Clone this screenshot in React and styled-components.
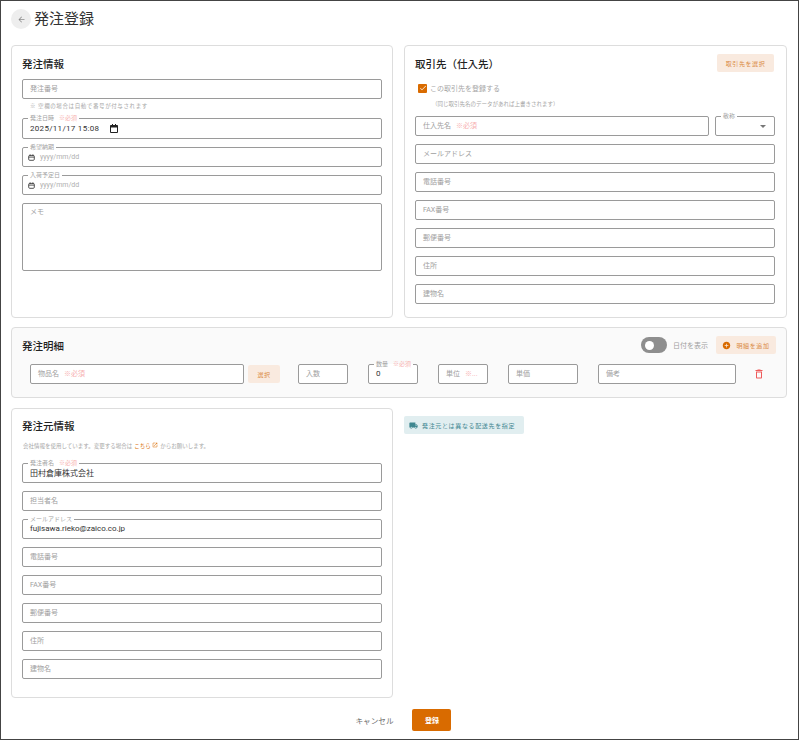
import React from "react";
import styled, { createGlobalStyle } from "styled-components";
import {
  MdAddCircle,
  MdArrowBack,
  MdCheck,
  MdDeleteOutline,
  MdLocalShipping,
  MdOpenInNew,
} from "react-icons/md";

const GlobalStyle = createGlobalStyle`
  html, body {
    margin: 0;
    padding: 0;
    background: #ffffff;
  }
  body {
    font-family: Roboto, "Noto Sans CJK JP", sans-serif;
    color: #333333;
  }
  * {
    box-sizing: border-box;
  }
`;

const ORANGE = "#d96b00";

const Frame = styled.div`
  width: 799px;
  height: 740px;
  border: 1px solid #444444;
  padding: 8px 11px 0 10px;
  overflow: hidden;
`;

const Header = styled.header`
  display: flex;
  align-items: center;
  gap: 3px;
  height: 20px;
  margin-bottom: 16px;
`;

const BackButton = styled.div`
  width: 20px;
  height: 20px;
  border-radius: 50%;
  background: #eeeeee;
  color: #8a8a8a;
  display: flex;
  align-items: center;
  justify-content: center;
`;

const PageTitle = styled.h1`
  margin: -3px 0 0;
  font-size: 15px;
  font-weight: 400;
  color: #333333;
`;

const TwoColumns = styled.div`
  display: grid;
  grid-template-columns: 382px 383px;
  gap: 11px;
  align-items: start;
`;

const Card = styled.section`
  border: 1px solid #dddddd;
  border-radius: 4px;
  background: ${(props) => props.$bg || "#ffffff"};
  height: ${(props) => props.$height}px;
  padding: ${(props) => props.$padding || "0 10px"};
`;

const CardHead = styled.div`
  display: flex;
  align-items: ${(props) => props.$align || "center"};
  justify-content: space-between;
`;

const Heading = styled.h2`
  margin: ${(props) => props.$top ?? 11}px 0 0;
  font-size: 10.5px;
  line-height: 16px;
  font-weight: 500;
  color: #222222;
`;

const Stack = styled.div`
  display: flex;
  flex-direction: column;
  gap: ${(props) => props.$gap ?? 8}px;
`;

const FieldBox = styled.div`
  position: relative;
  display: flex;
  align-items: ${(props) => (props.$multiline ? "flex-start" : "center")};
  flex: ${(props) => (props.$width ? `0 0 ${props.$width}px` : "1 1 auto")};
  height: ${(props) => props.$height || 20}px;
  margin-left: ${(props) => props.$ml || 0}px;
  border: 1px solid #9a9a9a;
  border-radius: 2px;
  background: #ffffff;
  padding: ${(props) => (props.$multiline ? "2px 7px" : props.$pad || "0 7px 2px")};
  font-size: 7px;
  color: #a0a0a0;
  white-space: nowrap;
  overflow: visible;
`;

const FloatLabel = styled.span`
  position: absolute;
  top: -5px;
  left: 5px;
  padding: 0 2px;
  font-size: 6px;
  line-height: 8px;
  color: #a3a3a3;
  background: linear-gradient(${(props) => props.$bg || "#ffffff"} 50%, #ffffff 50%);
`;

const Required = styled.span`
  margin-left: 5px;
  color: #f7b0b0;
`;

const Value = styled.span`
  font-size: 8px;
  color: #333333;
  letter-spacing: ${(props) => props.$spacing || 0}px;
`;

const DateHint = styled.span`
  margin-left: 5px;
  font-size: 7px;
  color: #b0b0b0;
`;

const Hint = styled.p`
  margin: ${(props) => props.$margin || "0"};
  font-size: 5.5px;
  line-height: 8px;
  color: #a6a6a6;
  letter-spacing: ${(props) => props.$spacing || 0}px;
`;

const SoftButton = styled.div`
  display: flex;
  align-items: center;
  justify-content: center;
  gap: 5px;
  flex: 0 0 auto;
  width: ${(props) => props.$width}px;
  height: ${(props) => props.$height}px;
  margin: ${(props) => props.$margin || "0"};
  border-radius: 2px;
  background: #f9eadf;
  color: #d98a45;
  font-size: 6px;
  letter-spacing: 0.6px;
`;

const CheckRow = styled.div`
  display: flex;
  align-items: center;
  gap: 3px;
  margin: 10px 0 0 3px;
  font-size: 7px;
  color: #a6a6a6;
`;

const CheckMark = styled.span`
  width: 9px;
  height: 9px;
  border-radius: 1px;
  background: ${ORANGE};
  color: #ffffff;
  display: flex;
  align-items: center;
  justify-content: center;
`;

const Row = styled.div`
  display: flex;
  gap: ${(props) => props.$gap ?? 6}px;
  align-items: center;
  margin: ${(props) => props.$margin || "0"};
`;

const SectionGap = styled.div`
  height: ${(props) => props.$height}px;
`;

const Controls = styled.div`
  display: flex;
  align-items: center;
  margin: 8px 0 2px;
`;

const Toggle = styled.div`
  display: flex;
  align-items: center;
  width: 26px;
  height: 16px;
  border-radius: 8px;
  background: #8e8e8e;
  padding-left: 4px;
  margin-right: 6px;
`;

const ToggleKnob = styled.span`
  width: 9px;
  height: 9px;
  border-radius: 50%;
  background: #ffffff;
`;

const ToggleText = styled.span`
  font-size: 7px;
  color: #a0a0a0;
  margin-right: 8px;
`;

const TrashButton = styled.div`
  display: flex;
  margin-left: 17px;
  color: #ee5a5a;
`;

const ShipButton = styled.div`
  display: flex;
  align-items: center;
  gap: 4px;
  width: 120px;
  height: 18px;
  margin-top: 8px;
  padding-left: 5px;
  border-radius: 2px;
  background: #e1eef0;
  color: #3f8790;
  font-size: 6px;
  letter-spacing: 0.65px;
  white-space: nowrap;
`;

const InlineLink = styled.span`
  color: ${ORANGE};
  margin: 0 2px;
`;

const Footer = styled.footer`
  display: flex;
  justify-content: center;
  align-items: center;
  padding-left: 9px;
  gap: 19px;
`;

const CancelText = styled.span`
  font-size: 7.6px;
  color: #6e6e6e;
`;

const SubmitButton = styled.div`
  width: 39px;
  height: 22px;
  border-radius: 2px;
  background: ${ORANGE};
  color: #ffffff;
  font-size: 7px;
  font-weight: 700;
  display: flex;
  align-items: center;
  justify-content: center;
`;

const CalendarSvg = styled.svg`
  flex: 0 0 auto;
  margin-left: ${(props) => props.$ml || 0}px;
`;

const ArrowSvg = styled.svg`
  margin: 0 1px 0 auto;
`;

const SmallCalendar = () => (
  <CalendarSvg width="7" height="7" viewBox="0 0 10 10" fill="none" stroke="#333333" strokeWidth="1.2">
    <rect x="1" y="2" width="8" height="7" rx="1.5" />
    <path d="M1 4.4h8M3 .6v2M7 .6v2" />
  </CalendarSvg>
);

const NativeCalendar = () => (
  <CalendarSvg $ml={11} width="8" height="9" viewBox="0 0 8 9">
    <path d="M0.5 1.5h7v7h-7z" fill="none" stroke="#222222" />
    <path d="M0.5 1.5h7v2h-7zM2 0h1v2H2zM5 0h1v2H5z" fill="#222222" />
  </CalendarSvg>
);

const Req = () => <Required>※必須</Required>;

const Field = ({ placeholder, required, ...rest }) => (
  <FieldBox {...rest}>
    {placeholder}
    {required && <Req />}
  </FieldBox>
);

const App = () => {
  return (
    <>
      <GlobalStyle />
      <Frame>
        <Header>
          <BackButton>
            <MdArrowBack size={9} />
          </BackButton>
          <PageTitle>発注登録</PageTitle>
        </Header>

        <TwoColumns>
          <Card $height={273}>
            <Heading>発注情報</Heading>
            <SectionGap $height={6} />
            <Field placeholder="発注番号" />
            <Hint $margin="3px 0 8px 8px" $spacing={0.6}>
              ※ 空欄の場合は自動で番号が付与されます
            </Hint>
            <Stack>
              <FieldBox $height={21} $pad="0 7px">
                <FloatLabel>
                  発注日時
                  <Req />
                </FloatLabel>
                <Value $spacing={0.3}>2025/11/17 15:08</Value>
                <NativeCalendar />
              </FieldBox>
              <FieldBox $pad="0 5px">
                <FloatLabel>希望納期</FloatLabel>
                <SmallCalendar />
                <DateHint>yyyy/mm/dd</DateHint>
              </FieldBox>
              <FieldBox $pad="0 5px">
                <FloatLabel>入荷予定日</FloatLabel>
                <SmallCalendar />
                <DateHint>yyyy/mm/dd</DateHint>
              </FieldBox>
              <Field placeholder="メモ" $height={68} $multiline />
            </Stack>
          </Card>

          <Card $height={273} $padding="0 11px 0 10px">
            <CardHead $align="flex-start">
              <Heading>取引先（仕入先）</Heading>
              <SoftButton $width={57} $height={18} $margin="8px 1px 0 0">
                取引先を選択
              </SoftButton>
            </CardHead>
            <CheckRow>
              <CheckMark>
                <MdCheck size={8} />
              </CheckMark>
              この取引先を登録する
            </CheckRow>
            <Hint $margin="7px 0 8px 17px">（同じ取引先名のデータがあれば上書きされます）</Hint>
            <Stack>
              <Row>
                <Field placeholder="仕入先名" required />
                <FieldBox $width={60} $pad="0 7px">
                  <FloatLabel>敬称</FloatLabel>
                  <ArrowSvg width="6" height="3" viewBox="0 0 6 3">
                    <path d="M0 0h6L3 3z" fill="#777777" />
                  </ArrowSvg>
                </FieldBox>
              </Row>
              <Field placeholder="メールアドレス" />
              <Field placeholder="電話番号" />
              <Field placeholder="FAX番号" />
              <Field placeholder="郵便番号" />
              <Field placeholder="住所" />
              <Field placeholder="建物名" />
            </Stack>
          </Card>
        </TwoColumns>

        <SectionGap $height={9} />

        <Card $height={71} $bg="#fafafa">
          <CardHead>
            <Heading $top={9}>発注明細</Heading>
            <Controls>
              <Toggle>
                <ToggleKnob />
              </Toggle>
              <ToggleText>日付を表示</ToggleText>
              <SoftButton $width={60} $height={18}>
                <MdAddCircle size={9} color={ORANGE} />
                明細を追加
              </SoftButton>
            </Controls>
          </CardHead>
          <Row $gap={0} $margin="8px 0 0 8px">
            <Field placeholder="物品名" required $width={214} />
            <SoftButton $width={32} $height={18} $margin="0 18px 0 4px">
              選択
            </SoftButton>
            <Field placeholder="入数" $width={50} />
            <FieldBox $width={50} $ml={20}>
              <FloatLabel $bg="#fafafa">
                数量
                <Req />
              </FloatLabel>
              <Value>0</Value>
            </FieldBox>
            <FieldBox $width={50} $ml={20}>
              単位<Required>※...</Required>
            </FieldBox>
            <Field placeholder="単価" $width={70} $ml={20} />
            <Field placeholder="備考" $width={138} $ml={20} />
            <TrashButton>
              <MdDeleteOutline size={12} />
            </TrashButton>
          </Row>
        </Card>

        <SectionGap $height={10} />

        <TwoColumns>
          <Card $height={290}>
            <Heading $top={10}>発注元情報</Heading>
            <Hint $margin="7px 0 13px 1px">
              会社情報を使用しています。変更する場合は
              <InlineLink>
                こちら <MdOpenInNew size={6} />
              </InlineLink>
              からお願いします。
            </Hint>
            <Stack>
              <FieldBox>
                <FloatLabel>
                  発注者名
                  <Req />
                </FloatLabel>
                <Value>田村倉庫株式会社</Value>
              </FieldBox>
              <Field placeholder="担当者名" />
              <FieldBox>
                <FloatLabel>メールアドレス</FloatLabel>
                <Value>fujisawa.rieko@zaico.co.jp</Value>
              </FieldBox>
              <Field placeholder="電話番号" />
              <Field placeholder="FAX番号" />
              <Field placeholder="郵便番号" />
              <Field placeholder="住所" />
              <Field placeholder="建物名" />
            </Stack>
          </Card>
          <ShipButton>
            <MdLocalShipping size={9} />
            発注元とは異なる配送先を指定
          </ShipButton>
        </TwoColumns>

        <SectionGap $height={11} />

        <Footer>
          <CancelText>キャンセル</CancelText>
          <SubmitButton>登録</SubmitButton>
        </Footer>
      </Frame>
    </>
  );
};

export default App;
